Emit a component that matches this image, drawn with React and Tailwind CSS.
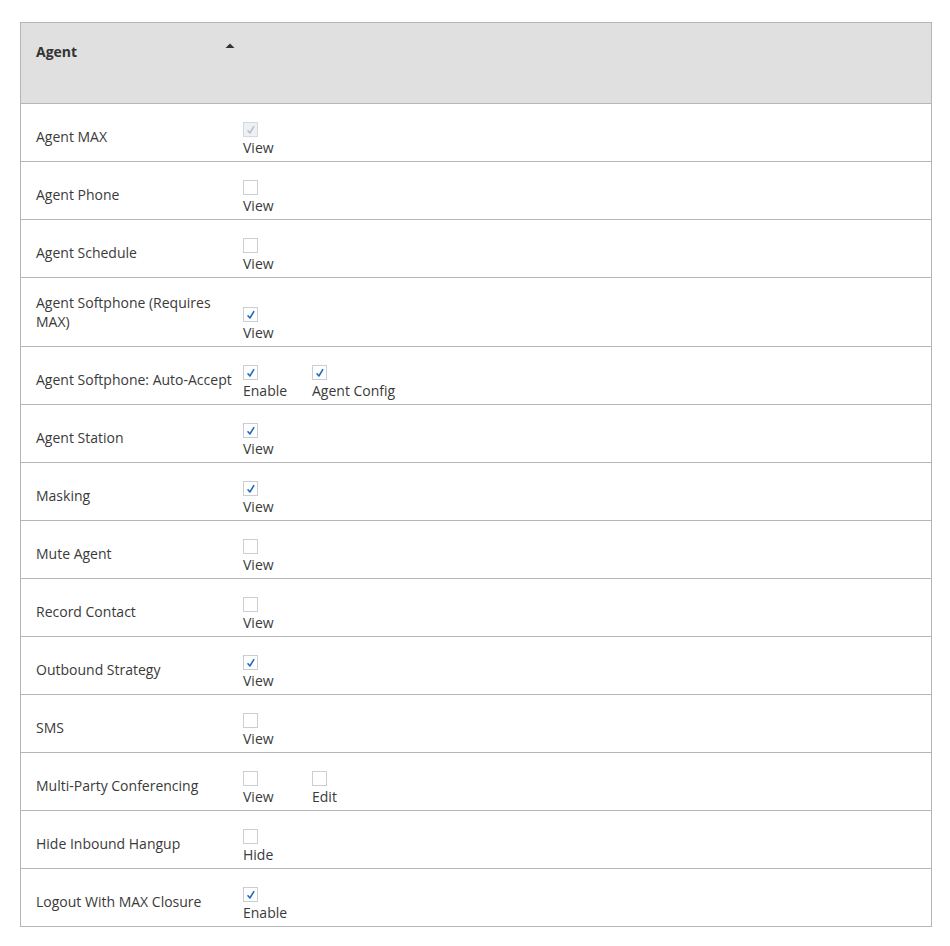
import React from "react";

const rows = [
  { label: "Agent MAX", opts: [{ t: "View", c: "disabled" }] },
  { label: "Agent Phone", opts: [{ t: "View", c: false }] },
  { label: "Agent Schedule", opts: [{ t: "View", c: false }] },
  { label: "Agent Softphone (Requires MAX)", opts: [{ t: "View", c: true }] },
  { label: "Agent Softphone: Auto-Accept", opts: [{ t: "Enable", c: true }, { t: "Agent Config", c: true }] },
  { label: "Agent Station", opts: [{ t: "View", c: true }] },
  { label: "Masking", opts: [{ t: "View", c: true }] },
  { label: "Mute Agent", opts: [{ t: "View", c: false }] },
  { label: "Record Contact", opts: [{ t: "View", c: false }] },
  { label: "Outbound Strategy", opts: [{ t: "View", c: true }] },
  { label: "SMS", opts: [{ t: "View", c: false }] },
  { label: "Multi-Party Conferencing", opts: [{ t: "View", c: false }, { t: "Edit", c: false }] },
  { label: "Hide Inbound Hangup", opts: [{ t: "Hide", c: false }] },
  { label: "Logout With MAX Closure", opts: [{ t: "Enable", c: true }] },
];

function Box({ state }) {
  const disabled = state === "disabled";
  const checked = state === true || disabled;
  return (
    <div
      className={
        "w-[15px] h-[15px] border flex items-center justify-center " +
        (disabled ? "bg-[#eef1f4] border-[#d3d9df]" : "bg-white border-[#c9cfd5]")
      }
    >
      {checked && (
        <svg width="10" height="10" viewBox="0 0 10 10">
          <path
            d="M2 5.8 L3.9 8 L7.8 1.6"
            fill="none"
            stroke={disabled ? "#b9c2cb" : "#1f6cc0"}
            strokeWidth="1.6"
            strokeLinecap="round"
            strokeLinejoin="round"
          />
        </svg>
      )}
    </div>
  );
}

export default function App() {
  return (
    <div
      className="bg-white w-[950px] min-h-[946px] pt-[22px] pl-[20px] text-[14px] text-[#3a3a3a]"
      style={{ fontFamily: '"Open Sans", "Noto Sans", sans-serif' }}
    >
      <div className="w-[912px] border border-[#b5b5b5]">
        <div className="h-[80px] bg-[#e0e0e0] flex">
          <div className="w-[222px] pl-[15px] pr-[8px] pt-[19px] flex justify-between items-start">
            <span className="font-bold leading-[19px] text-[#333]">Agent</span>
            <svg width="10" height="6" viewBox="0 0 10 6" className="mt-[1px]">
              <path d="M0.5 5 L5 0.5 L9.5 5 Z" fill="#333" />
            </svg>
          </div>
        </div>
        {rows.map((r) => (
          <div key={r.label} className="flex items-end border-t border-[#b5b5b5]">
            <div className="w-[222px] shrink-0 pl-[15px] pr-[4px] pt-[15px] pb-[15px] leading-[19px]">
              {r.label}
            </div>
            <div className="flex pt-[18px] pb-[4px]">
              {r.opts.map((o) => (
                <div key={o.t} className="w-[69px] flex flex-col items-start">
                  <Box state={o.c} />
                  <span className="mt-[1px] leading-[19px] whitespace-nowrap">{o.t}</span>
                </div>
              ))}
            </div>
          </div>
        ))}
      </div>
    </div>
  );
}
